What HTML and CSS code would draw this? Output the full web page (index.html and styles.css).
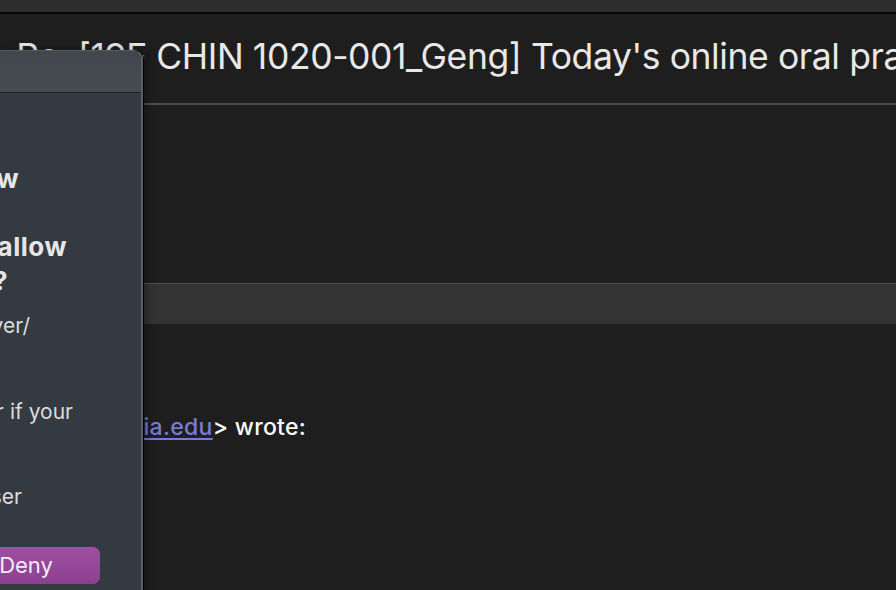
FILE: index.html
```html
<!DOCTYPE html>
<html>
<head>
<meta charset="utf-8">
<link rel="stylesheet" href="styles.css">
</head>
<body>
<div class="window">
  <div class="topbar"></div>
  <div class="subject">
    <h1 class="subject-text">Fwd: Re: [19F CHIN 1020-001_Geng] Today's online oral practice</h1>
  </div>
  <div class="gap"></div>
  <div class="band"></div>
  <div class="message">
    <p class="quote-head">On Wed, Oct 2, 2019 at 9:14 AM Geng, Ying &lt;<a class="mail" href="#">yg2x@virginia.edu</a>&gt; wrote:</p>
  </div>

  <div class="panel">
    <div class="panel-head"></div>
    <div class="panel-body">
      <div class="inner">
        <div class="hline h1">Screen Sharing Allow</div>
        <div class="hline h2">&nbsp;</div>
        <div class="hline h3">Would you like to allow</div>
        <div class="hline h4">this?</div>
        <div class="pline p1">to access your server/</div>
        <div class="pline p2">&nbsp;</div>
        <div class="pline p3">&nbsp;</div>
        <div class="pline p4">Allow only for if your</div>
        <div class="pline p5">&nbsp;</div>
        <div class="pline p6">&nbsp;</div>
        <div class="pline p7">settings in the browser</div>
        <div class="actions">
          <button class="deny">Deny</button>
        </div>
      </div>
    </div>
  </div>
</div>
</body>
</html>
```

FILE: styles.css
```css
* { box-sizing: border-box; }
html, body {
  margin: 0;
  padding: 0;
  width: 896px;
  height: 590px;
  overflow: hidden;
  background: #1e1e1e;
}
.window {
  position: relative;
  width: 896px;
  height: 590px;
  overflow: hidden;
  background: #1e1e1e;
  font-family: Inter, "Liberation Sans", sans-serif;
}
.topbar {
  height: 14px;
  background: #2d2d2d;
  border-bottom: 2px solid #050505;
}
.subject {
  height: 91px;
  border-bottom: 2px solid #4e4e4e;
  overflow: hidden;
  white-space: nowrap;
}
.subject-text {
  margin: 0 0 0 -73px;
  padding: 21px 0 0 0;
  font-size: 35.5px;
  font-weight: 400;
  line-height: 44px;
  color: #e8e8e8;
  letter-spacing: -0.4px;
}
.gap { height: 178px; }
.band {
  height: 41px;
  background: #333333;
  border-top: 1px solid #505050;
}
.message {
  padding: 89px 0 0 0;
  white-space: nowrap;
}
.quote-head {
  margin: 0 0 0 -507px;
  font-size: 23px;
  font-weight: 500;
  letter-spacing: 0.3px;
  line-height: 28px;
  color: #fafafa;
}
.mail {
  color: #7b7bd6;
  text-decoration: underline;
  text-underline-offset: 3px;
  text-decoration-thickness: 1.5px;
}

.panel {
  position: absolute;
  left: 0;
  top: 50px;
  width: 143px;
  height: 560px;
  background: #343a41;
  border-right: 2px solid #5b5f65;
  border-top-right-radius: 9px;
  box-shadow: 1px 0 0 #000, 4px 0 10px rgba(0,0,0,0.35);
  overflow: hidden;
}
.panel-head {
  height: 43px;
  background: linear-gradient(#42474e, #464b52);
  border-top: 1px solid #575c62;
  border-bottom: 1px solid #1d2024;
}
.panel-body {
  position: relative;
  height: 500px;
}
.inner {
  width: 600px;
  margin-left: -459px;
  padding-top: 69px;
  white-space: nowrap;
  text-align: right;
}
.hline {
  font-size: 26px;
  font-weight: 700;
  letter-spacing: 0.5px;
  line-height: 34px;
  color: #e6e6e6;
}
.h1 { padding-right: 122px; }
.h3 { padding-right: 74px; }
.h4 { padding-right: 133px; }
.pline {
  font-size: 21px;
  line-height: 28.5px;
  color: #dcdcdc;
}
.hline.h4 { margin-bottom: 14px; }
.p1 { padding-right: 111px; }
.p4 { padding-right: 68px; }
.p7 { padding-right: 119px; }
.actions {
  display: flex;
  justify-content: flex-end;
  padding: 35px 41px 0 0;
}
.deny {
  width: 148px;
  height: 37px;
  border: none;
  border-radius: 7px;
  background: linear-gradient(#a04fa3, #8c3f90);
  color: #f5ecf5;
  font-family: Inter, "Liberation Sans", sans-serif;
  font-size: 22px;
  line-height: 37px;
  padding: 0;
  text-align: center;
}
```
